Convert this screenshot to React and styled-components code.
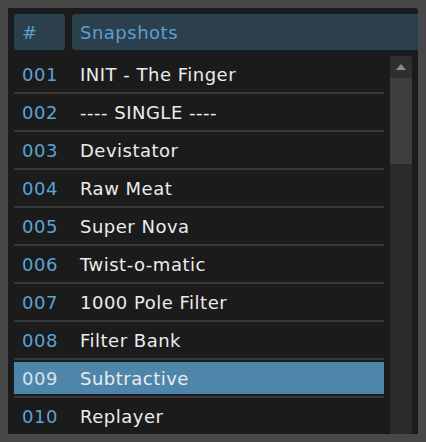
import React from "react";
import styled, { createGlobalStyle } from "styled-components";

const Global = createGlobalStyle`
  html, body { margin: 0; padding: 0; background: #484848; }
  body { padding: 8px; font-family: "DejaVu Sans", sans-serif; }
`;

const Panel = styled.div`
  width: 410px;
  height: 426px;
  background: #1b1b1b;
  border-radius: 0 3px 0 0;
  padding: 6px 0 0 6px;
  box-sizing: border-box;
  overflow: hidden;
  display: flex;
  flex-direction: column;
  gap: 6px;
`;

const Header = styled.div`
  display: flex;
  gap: 7px;
  height: 36px;
  flex: none;
`;

const HeadCell = styled.div`
  background: #2b3f4d;
  color: #5a9fcf;
  font-size: 18px;
  letter-spacing: 0.5px;
  display: flex;
  align-items: center;
  padding-left: 8px;
  box-sizing: border-box;
  border-radius: ${(p) => (p.$first ? "3px" : "3px 0 0 3px")};
  ${(p) => (p.$first ? "width: 51px;" : "flex: 1;")}
`;

const Body = styled.div`
  display: flex;
  gap: 6px;
  padding-right: 6px;
  flex: 1;
  min-height: 0;
`;

const Rows = styled.div`
  flex: 1;
  display: flex;
  flex-direction: column;
`;

const Row = styled.div`
  height: 38px;
  flex: none;
  box-sizing: border-box;
  border-bottom: 2px solid #393939;
  padding: ${(p) => (p.$selected ? "2px 0" : "0")};
`;

const RowInner = styled.div`
  height: 100%;
  display: flex;
  align-items: center;
  font-size: 18px;
  letter-spacing: 0.5px;
  background: ${(p) => (p.$selected ? "#4e86ab" : "transparent")};
`;

const Num = styled.span`
  width: 66px;
  padding-left: 8px;
  box-sizing: border-box;
  color: ${(p) => (p.$selected ? "#d6e2ea" : "#5aa4d8")};
`;

const Name = styled.span`
  color: #ececec;
  white-space: nowrap;
`;

const Scrollbar = styled.div`
  width: 22px;
  display: flex;
  flex-direction: column;
  background: #2a2a2a;
  border-radius: 3px 3px 0 0;
  overflow: hidden;
`;

const ScrollButton = styled.div`
  height: 22px;
  background: #2f2f2f;
  display: flex;
  align-items: center;
  justify-content: center;
`;

const Thumb = styled.div`
  height: 86px;
  background: #3d3d3d;
`;

const items = [
  ["001", "INIT - The Finger"],
  ["002", "---- SINGLE ----"],
  ["003", "Devistator"],
  ["004", "Raw Meat"],
  ["005", "Super Nova"],
  ["006", "Twist-o-matic"],
  ["007", "1000 Pole Filter"],
  ["008", "Filter Bank"],
  ["009", "Subtractive"],
  ["010", "Replayer"],
];

export default function App() {
  return (
    <>
      <Global />
      <Panel>
        <Header>
          <HeadCell $first>#</HeadCell>
          <HeadCell>Snapshots</HeadCell>
        </Header>
        <Body>
          <Rows>
            {items.map(([n, name]) => {
              const sel = n === "009";
              return (
                <Row key={n} $selected={sel}>
                  <RowInner $selected={sel}>
                    <Num $selected={sel}>{n}</Num>
                    <Name>{name}</Name>
                  </RowInner>
                </Row>
              );
            })}
          </Rows>
          <Scrollbar>
            <ScrollButton>
              <svg width="10" height="6" viewBox="0 0 10 6">
                <polygon points="5,0 10,6 0,6" fill="#8a8a8a" />
              </svg>
            </ScrollButton>
            <Thumb />
          </Scrollbar>
        </Body>
      </Panel>
    </>
  );
}
